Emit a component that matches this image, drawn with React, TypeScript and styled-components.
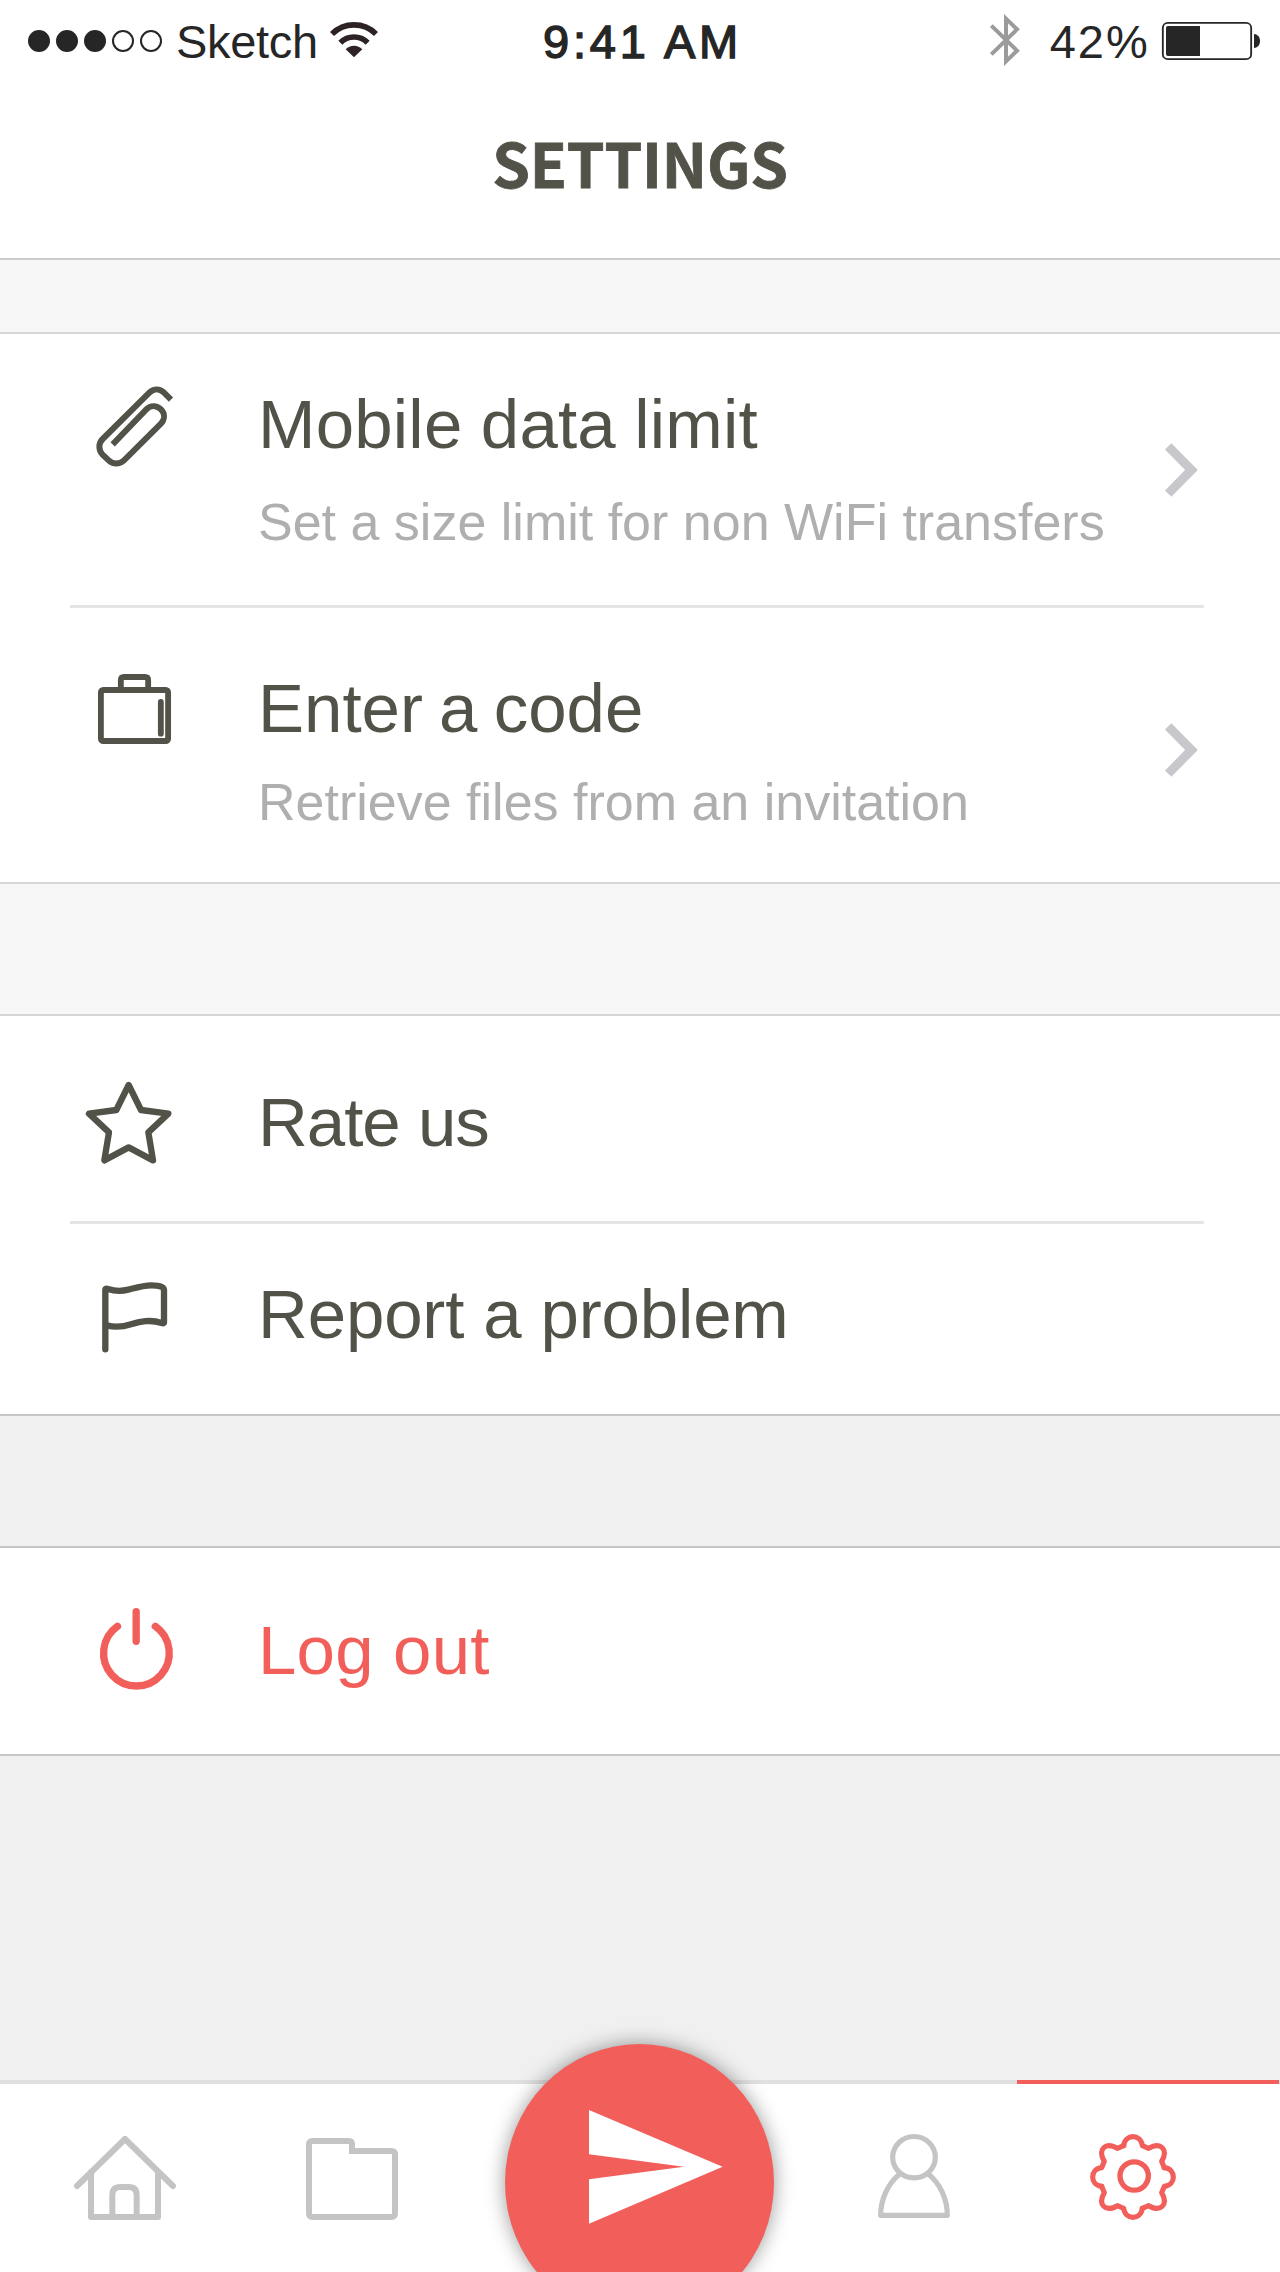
import React from "react";
import styled, { createGlobalStyle } from "styled-components";

const ink = "#525249";
const coral = "#f25f5b";
const muted = "#c4c4c4";
const surface = "#ffffff";
const sans = `"Liberation Sans", Arial, sans-serif`;

const GlobalStyle = createGlobalStyle`
  * { box-sizing: border-box; }
  body { margin: 0; background: ${surface}; }
  svg { display: block; flex: none; overflow: visible; }
`;

const Screen = styled.div`
  display: flex;
  flex-direction: column;
  width: 1280px;
  height: 2272px;
  overflow: hidden;
  background: #f0f0f0;
  font-family: ${sans};
  color: ${ink};
`;

const StatusBar = styled.div`
  display: grid;
  grid-template-columns: 1fr auto 1fr;
  align-items: center;
  height: 82px;
  padding: 0 20px 0 28px;
  background: ${surface};
  color: #262626;
`;

const StatusSide = styled.div<{ $end?: boolean }>`
  display: flex;
  align-items: center;
  justify-content: ${(p) => (p.$end ? "flex-end" : "flex-start")};
`;

const StatusText = styled.span<{ $spacing?: number }>`
  padding-top: 1px;
  font-size: 47px;
  line-height: 53px;
  white-space: nowrap;
  letter-spacing: ${(p) => p.$spacing ?? 0}px;
`;

const Carrier = styled(StatusText)`
  margin: 0 12px 0 14px;
`;

const Clock = styled(StatusText)`
  margin-left: -3px;
  -webkit-text-stroke: 1.4px #262626;
`;

const Percent = styled(StatusText)`
  margin: 0 12px 0 30px;
`;

const Signal = styled.div`
  display: flex;
  gap: 6px;
`;

const Dot = styled.span<{ $on: boolean }>`
  width: 22px;
  height: 22px;
  border: 2px solid #262626;
  border-radius: 50%;
  background: ${(p) => (p.$on ? "#262626" : "transparent")};
`;

const Header = styled.header`
  height: 178px;
  padding-top: 30px;
  border-bottom: 2px solid #cbcbcb;
  background: ${surface};
`;

const Title = styled.h1`
  margin: 0;
  font-family: "Noto Sans CJK SC", sans-serif;
  font-size: 60.5px;
  font-weight: 700;
  line-height: 100px;
  letter-spacing: -0.2px;
  text-align: center;
  -webkit-text-stroke: 0.8px ${ink};
`;

const Gap = styled.div<{ $height: number; $light?: boolean }>`
  height: ${(p) => p.$height}px;
  background: ${(p) => (p.$light ? "#f7f7f7" : "#f0f0f0")};
`;

const Group = styled.section<{ $top: string; $bottom: string }>`
  padding: 0 76px 0 70px;
  background: ${surface};
  border-top: 2px solid ${(p) => p.$top};
  border-bottom: 2px solid ${(p) => p.$bottom};
`;

const RowBox = styled.div<{ $height: number; $pad: number; $divided?: boolean }>`
  display: flex;
  align-items: flex-start;
  height: ${(p) => p.$height}px;
  padding-top: ${(p) => p.$pad}px;
  border-bottom: ${(p) => (p.$divided ? "3px solid #e5e5e5" : "none")};
`;

const IconCell = styled.div`
  flex: none;
  width: 188px;
`;

const Copy = styled.div<{ $gap?: number }>`
  display: flex;
  flex: 1;
  flex-direction: column;
  gap: ${(p) => p.$gap ?? 0}px;
  min-width: 0;
  padding-top: 1px;
`;

const Label = styled.span<{ $danger?: boolean; $spacing?: number; $words?: number }>`
  font-size: 69px;
  line-height: 80px;
  white-space: nowrap;
  letter-spacing: ${(p) => p.$spacing ?? 0}px;
  word-spacing: ${(p) => p.$words ?? 0}px;
  color: ${(p) => (p.$danger ? coral : ink)};
`;

const Hint = styled.span<{ $spacing?: number }>`
  font-size: 52px;
  line-height: 60px;
  white-space: nowrap;
  letter-spacing: ${(p) => p.$spacing ?? 0}px;
  color: #afafaf;
`;

const ChevronCell = styled.div<{ $drop: number }>`
  margin: ${(p) => p.$drop}px 2px 0 0;
`;

const Filler = styled.div`
  flex: 1;
`;

const TabBar = styled.nav`
  display: grid;
  grid-template-columns: 250px 204px 372px 191px 262px;
  flex: none;
  height: 192px;
  border-top: 4px solid #e0e0e0;
  background: ${surface};
`;

const Tab = styled.a<{ $active?: boolean; $shift?: number }>`
  display: flex;
  justify-content: center;
  align-items: flex-start;
  margin-top: -4px;
  padding: 48px ${(p) => p.$shift ?? 0}px 0 0;
  border-top: 4px solid ${(p) => (p.$active ? coral : "transparent")};
`;

const SendCell = styled.div`
  display: flex;
  justify-content: center;
  align-items: flex-start;
  padding-right: 1px;
`;

const SendButton = styled.button`
  display: flex;
  align-items: flex-start;
  flex: none;
  width: 269px;
  height: 277px;
  margin: -40px 0 0;
  padding: 0;
  border: 0;
  border-radius: 50%;
  background: ${coral};
  box-shadow: 0 0 20px rgba(0, 0, 0, 0.4);
`;

const RowIcon = ({ top, children, color = ink, width = 19 }: { top: number; children: React.ReactNode; color?: string; width?: number }) => (
  <svg width="120" height="80" viewBox={`30 ${top} 360 240`} fill="none" stroke={color} strokeWidth={width}>
    {children}
  </svg>
);

const ClipIcon = () => (
  <RowIcon top={102} width={18}>
    <path d="M333 149L312 128C299 115 281 115 268 128L128 267C115 280 115 299 127 313L146 331C159 344 178 344 192 331L302 222C315 208 315 190 303 178C290 166 272 165 259 178L158 283" />
  </RowIcon>
);

const CaseIcon = () => (
  <RowIcon top={84} width={17.5}>
    <rect x="122.7" y="150" width="201.6" height="153" rx="7" />
    <path d="M182.5 150V121Q182.5 111 192 111H255Q264.5 111 264.5 121V150" />
    <path d="M302.5 186V281" strokeLinecap="round" />
  </RowIcon>
);

const StarIcon = () => (
  <RowIcon top={96}>
    <path d="M206 105L243 180L325 191L265 247L279 331L206 292L133 331L147 247L87 191L169 180Z" strokeLinejoin="round" />
  </RowIcon>
);

const FlagIcon = () => (
  <RowIcon top={672}>
    <path
      d="M136 898V720Q136 714 144 717C165 724 185 724 205 719C228 713 250 706 274 706Q312 706 312 720V817Q312 821 305 819C270 807 240 815 213 823C185 832 165 833 140 826"
      strokeLinecap="round"
      strokeLinejoin="round"
    />
  </RowIcon>
);

const PowerIcon = () => (
  <RowIcon top={90} color={coral} width={22}>
    <path d="M172.5 139A98.5 98.5 0 1 0 286 139M228.5 95V184" strokeLinecap="round" />
  </RowIcon>
);

const Chevron = () => (
  <svg width="40" height="56" viewBox="786 65.5 120 168" fill="none" stroke="#c8c7cc" strokeWidth="27">
    <path d="M804.5 78.5L874.5 149.5L804.5 220.5" />
  </svg>
);

const WifiIcon = () => (
  <svg width="48" height="36" viewBox="990 66 144 108" fill="none" stroke="#2d2324" strokeWidth="17">
    <path d="M996 99A93.5 93.5 0 0 1 1128 99" />
    <path d="M1021 125A58 58 0 0 1 1103 125" />
    <path d="M1062 169L1037 145A35 35 0 0 1 1087 145Z" fill="#2d2324" stroke="none" />
  </svg>
);

const BluetoothIcon = () => (
  <svg width="30" height="52" viewBox="90 45 90 156" fill="none" stroke="#9b9b9b" strokeWidth="12">
    <path d="M94 77L171 152L138 184V56L171 88L94 163" />
  </svg>
);

const BatteryIcon = () => (
  <svg width="98" height="38" viewBox="606 66 294 114" fill="#262626">
    <rect x="608.5" y="68.5" width="265" height="109" rx="15" fill="none" stroke="#262626" strokeWidth="5.5" />
    <path d="M624 78H720V168H624Q618 168 618 162V84Q618 78 624 78Z" />
    <path d="M882 102C894 103 900 112 900 123C900 134 894 143 882 144Z" />
  </svg>
);

const TabIcon = ({ left, children, color = muted, width = 18 }: { left: number; children: React.ReactNode; color?: string; width?: number }) => (
  <svg width="120" height="96" viewBox={`${left} 216 360 288`} fill="none" stroke={color} strokeWidth={width}>
    {children}
  </svg>
);

const HomeIcon = () => (
  <TabIcon left={75}>
    <path d="M111 378L255 237L399 378M153 336V471H354V336" strokeLinecap="round" strokeLinejoin="round" />
    <path d="M217 471V405Q217 381 241 381H266Q290 381 290 405V471" />
  </TabIcon>
);

const FolderIcon = () => (
  <TabIcon left={756}>
    <path d="M936 273V253Q936 243 926 243H818Q807 243 807 254V460Q807 471 818 471H1054Q1065 471 1065 460V284Q1065 273 1054 273Z" />
  </TabIcon>
);

const UserIcon = () => (
  <TabIcon left={42} width={15.5}>
    <ellipse cx="222" cy="291.5" rx="64" ry="62" />
    <path d="M179 342C145 370 122 415 122 466H322C322 415 299 370 265 342" strokeLinejoin="round" />
  </TabIcon>
);

const GearIcon = () => (
  <TabIcon left={699} color={coral} width={15.5}>
    {[0, 90, 180, 270].map((angle) => (
      <path
        key={angle}
        d="M851 257C855 221 903 221 907 257L926 265C962 244 986 268 965 304L973 323"
        transform={`rotate(${angle} 879 351)`}
        strokeLinecap="round"
        strokeLinejoin="round"
      />
    ))}
    <circle cx="882.5" cy="348" r="42.5" strokeWidth="16" />
  </TabIcon>
);

const SendIcon = () => (
  <svg width="269" height="269" viewBox="75 72 807 807" fill="#fff">
    <path d="M327 270L728 440L327 611V478L612 440L327 403Z" />
  </svg>
);

export default function App() {
  return (
    <Screen>
      <GlobalStyle />
      <StatusBar>
        <StatusSide>
          <Signal>
            {[true, true, true, false, false].map((on, i) => (
              <Dot key={i} $on={on} />
            ))}
          </Signal>
          <Carrier $spacing={-0.3}>Sketch</Carrier>
          <WifiIcon />
        </StatusSide>
        <Clock $spacing={3.8}>9:41 AM</Clock>
        <StatusSide $end>
          <BluetoothIcon />
          <Percent $spacing={2.1}>42%</Percent>
          <BatteryIcon />
        </StatusSide>
      </StatusBar>
      <Header>
        <Title>SETTINGS</Title>
      </Header>

      <Gap $height={72} $light />
      <Group $top="#d6d6d6" $bottom="#d6d6d6">
        <RowBox $height={274} $pad={50} $divided>
          <IconCell><ClipIcon /></IconCell>
          <Copy $gap={27}>
            <Label $spacing={0.2} $words={-1}>Mobile data limit</Label>
            <Hint>Set a size limit for non WiFi transfers</Hint>
          </Copy>
          <ChevronCell $drop={58}><Chevron /></ChevronCell>
        </RowBox>
        <RowBox $height={274} $pad={60}>
          <IconCell><CaseIcon /></IconCell>
          <Copy $gap={23}>
            <Label $spacing={0} $words={-3}>Enter a code</Label>
            <Hint>Retrieve files from an invitation</Hint>
          </Copy>
          <ChevronCell $drop={54}><Chevron /></ChevronCell>
        </RowBox>
      </Group>

      <Gap $height={130} $light />
      <Group $top="#d6d6d6" $bottom="#c6c6c6">
        <RowBox $height={208} $pad={66} $divided>
          <IconCell><StarIcon /></IconCell>
          <Copy><Label $spacing={-1}>Rate us</Label></Copy>
        </RowBox>
        <RowBox $height={190} $pad={50}>
          <IconCell><FlagIcon /></IconCell>
          <Copy><Label $spacing={-0.15}>Report a problem</Label></Copy>
        </RowBox>
      </Group>

      <Gap $height={130} />
      <Group $top="#c6c6c6" $bottom="#c6c6c6">
        <RowBox $height={206} $pad={62}>
          <IconCell><PowerIcon /></IconCell>
          <Copy><Label $danger $spacing={0.2}>Log out</Label></Copy>
        </RowBox>
      </Group>

      <Filler />
      <TabBar>
        <Tab><HomeIcon /></Tab>
        <Tab><FolderIcon /></Tab>
        <SendCell>
          <SendButton aria-label="Send"><SendIcon /></SendButton>
        </SendCell>
        <Tab $shift={15}><UserIcon /></Tab>
        <Tab $active $shift={30}><GearIcon /></Tab>
      </TabBar>
    </Screen>
  );
}
